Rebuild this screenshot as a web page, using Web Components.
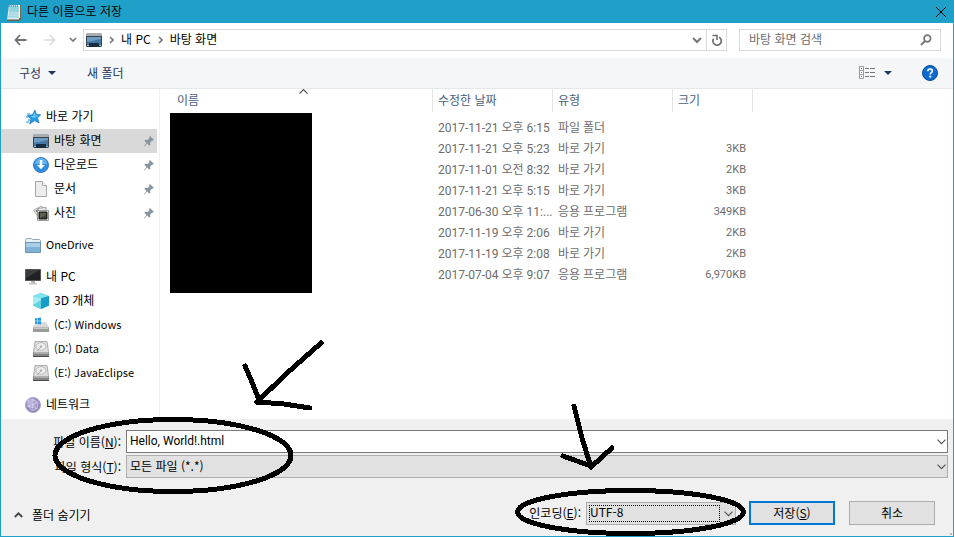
<!DOCTYPE html>
<html lang="ko">
<head>
<meta charset="utf-8">
<title>다른 이름으로 저장</title>
<style>
body { margin: 0; font: 12px/16px "Noto Sans CJK KR", "Noto Sans", sans-serif; color: #000; }
</style>
</head>
<body>
<save-dialog></save-dialog>
<script>
const ICONS = {
  notepad: [16, 18, `<path d="M3 2h12v14l-2 2H1l2-3z" fill="#6c5b42"/><path d="M3 2h10.500L13 16.500H1z" fill="#d6eef3"/><path d="M4 3h9v6H3z" fill="#8fd0dd"/><path d="M3 9h10v6H2z" fill="#b5e2ea"/><path d="M3.500 6h9M3 8.500h9M3 11h9M2.500 13.500h10" stroke="#9fd0db" stroke-width=".7"/><path d="M13.500 2v13" stroke="#fff8df" stroke-width="1.200"/><path d="M3.500 1v3M5.500 1v3M7.500 1v3M9.500 1v3M11.500 1v3" stroke="#78898c" stroke-width=".8"/>`],
  close: [12, 12, `<path d="M1 1l10 10M11 1L1 11" stroke="#000" fill="none"/>`],
  back: [13, 12, `<path d="M6 1L1.500 6 6 11M1.500 6H12.500" stroke="#707070" stroke-width="1.800" fill="none"/>`],
  forward: [13, 12, `<path d="M7 1l4.500 5L7 11M11.500 6H.5" stroke="#dcdcdc" stroke-width="1.600" fill="none"/>`],
  down: [8, 6, `<path d="M1 1l3 3 3-3" stroke="#777" stroke-width="1.600" fill="none"/>`],
  downBig: [10, 7, `<path d="M1 1l4 4 4-4" stroke="#777" stroke-width="2" fill="none"/>`],
  combo: [9, 6, `<path d="M.5.7l4 4 4-4" stroke="#505050" stroke-width="1.100" fill="none"/>`],
  up: [9, 6, `<path d="M.8 5l3.700-3.700L8.200 5" stroke="#444" stroke-width="1.800" fill="none"/>`],
  sort: [9, 5, `<path d="M.5 4.500l4-4 4 4" stroke="#555" stroke-width="1.100" fill="none"/>`],
  right: [5, 8, `<path d="M1 1l3 3-3 3" stroke="#777" stroke-width="1.600" fill="none"/>`],
  tri: [8, 4, `<path d="M0 0h8L4 4z" fill="#1e395b"/>`],
  refresh: [12, 13, `<path d="M8 3.200A4.200 4.200 0 1 1 2.600 4.600" stroke="#6f6f6f" stroke-width="1.700" fill="none"/><path d="M1.500 1.500h4.500v4.500" stroke="#6f6f6f" stroke-width="1.600" fill="none"/>`],
  search: [12, 12, `<circle cx="7.300" cy="4.500" r="3.300" stroke="#777" stroke-width="1.700" fill="none"/><path d="M5 7L1 11" stroke="#777" stroke-width="2"/>`],
  view: [17, 13, `<path d="M.5.5h4v12h-4zM.5 4.500h4M.5 8.500h4" fill="#fff" stroke="#9a9a9a"/><path d="M2 2h1v1H2z" fill="#555"/><path d="M2 6h1v1H2z" fill="#2674d8"/><path d="M2 10h1v1H2z" fill="#d33"/><path d="M6 2.500h4m1 0h5M6 6.500h4m1 0h5M6 10.500h4m1 0h5" stroke="#777"/>`],
  help: [16, 16, `<circle cx="8" cy="8" r="7.500" fill="#0c6bd0" stroke="#0a4a9c"/><path d="M5.800 6.200C5.800 3.300 10.400 3.300 10.300 6c0 1.600-2.100 1.600-2.100 3.500" stroke="#fff" stroke-width="1.700" fill="none"/><path d="M7.200 10.700h2v1.800h-2z" fill="#fff"/>`],
  desktop: [16, 14, `<path d="M1 0h14l1 3v10l-1 1H1l-1-1V3z" fill="#3d4248"/><path d="M1 0h14l1 3H0z" fill="#a9adaf"/><path d="M1 4h14v8H1z" fill="#4678a6"/><path d="M1 4h14v2L1 9z" fill="#6a9cc4"/><path d="M3 10h10v4H3z" fill="#172b3f"/><path d="M1 12h2v1H1zM13 12h2v1h-2z" fill="#84b8da"/>`],
  star: [16, 16, `<path d="M10 1l1.400 4.500 4.300.2-3.200 3.200 1.600 5L9.500 11.600 4.700 15l1.200-5L2.500 6.500l5-.8z" fill="#229ae8" stroke="#1474bd" stroke-width=".7"/><path d="M9.500 3l1 3.500 3 .3-3 1.700-3 .3-2-1.600 3-.5z" fill="#67c9fa"/><path d="M2 5h3M1 8h4M3 11h2M1 13h3" stroke="#1b94df"/>`],
  download: [16, 16, `<circle cx="8" cy="8" r="7.500" fill="#2e8ee0" stroke="#347bbd"/><path d="M2 7a6 6 0 0 1 12 0z" fill="#62b2f0"/><path d="M6.700 3h2.600v5H12l-4 4.200L4 8h2.700z" fill="#fff"/>`],
  doc: [16, 16, `<path d="M2.500.5h7l4 4v11h-11z" fill="#ededed" stroke="#a7a7a7"/><path d="M9.500.5v4h4" fill="#fff" stroke="#a7a7a7"/>`],
  photo: [16, 16, `<path d="M.7 5l8-4 2.600 5-7 5z" fill="#fafafa" stroke="#aaa"/><path d="M2.500 5.500l3-1.500v6" fill="#555"/><path d="M4 3.500l9-1v3" fill="#eee" stroke="#999"/><path d="M4.500 5.500h11v10h-11z" fill="#f6f6f6" stroke="#999"/><path d="M6 7h8v7H6z" fill="#3d3d32" stroke="#171717"/><path d="M7 8h6v2L7 13z" fill="#61614f"/>`],
  pin: [10, 11, `<path d="M6 0l4 4-1 .8-.8-.2-2 2 .1 2.200-1 1L3.200 7.600.2 10.800l-.2-.5L2.500 7 .3 4.800l1-1 2.200.2 2-2L5 1z" fill="#8996a0"/>`],
  folder: [16, 15, `<path d="M.5 2.500l1-2h5l1 1h7l1 1v4H.5z" fill="#e7f0f3" stroke="#8fa9b5"/><path d="M.5 4.500h15v10H.5z" fill="#7fb2d6" stroke="#6b95b2"/><path d="M1 5h14v4H1z" fill="#a7cee5"/>`],
  pc: [16, 16, `<path d="M.5.500h15v11H.5z" fill="#202223" stroke="#555"/><path d="M1 1h14L1 9z" fill="#3a3d3f"/><path d="M6 12h4v2H6z" fill="#aeb4b7"/><path d="M4 14h8v1.500H4z" fill="#c0c4c5"/>`],
  cube: [16, 16, `<path d="M8 0l8 3v9.500L8 16l-8-3.500V3z" fill="#34bfd3"/><path d="M8 0l8 3-8 2.500L0 3z" fill="#7fe3ec"/><path d="M0 3l8 2.500V16l-8-3.500z" fill="#62d3df"/><path d="M8 5.500L16 3v9.500L8 16z" fill="#159cc8"/><path d="M0 3l8 2.500V7L0 12z" fill="#a5edf1"/>`],
  windrive: [16, 16, `<path d="M3 5h10l3 5v4.500H0V10z" fill="#d9d9d9"/><path d="M0 10.500h16V15H0z" fill="#9a9a9a"/><path d="M1 11h14v1H1z" fill="#c9c9c9"/><path d="M12 13h2v1h-2z" fill="#69cb54"/><path d="M2 1.300L4.500 1v2.700H2zM5 .9L8 .5v3.200H5zM2 4.300h2.500V7L2 6.700zM5 4.300h3v3.200L5 7.100z" fill="#2494e2"/>`],
  drive: [16, 16, `<path d="M2 .5h12l1.500 10v5H.5v-5z" fill="#ddd" stroke="#a0a0a0" stroke-width=".8"/><ellipse cx="8" cy="5.500" rx="5" ry="3.900" fill="#eee" stroke="#bbb"/><circle cx="8" cy="5.500" r="1.300" fill="#bbb"/><path d="M8 6l-4 4" stroke="#aaa"/><path d="M0 11.500h16v4H0z" fill="#858585"/><path d="M1 12h14v1H1z" fill="#aaa"/><path d="M0 15h16v1H0z" fill="#4c4c4c"/>`],
  network: [16, 16, `<circle cx="8" cy="8" r="7.500" fill="#9487bd" stroke="#aaa4c4"/><circle cx="7" cy="6" r="5" fill="#aaa0d0"/><path d="M3 3.500l5-1 5 3-1 6-5 2-4-4zM3 3.500l9 8M8 2.500l-5 7 10-4M3 9.500l9 2M8 2.500l-1 11" stroke="#d8d2ed" stroke-width=".7" fill="none"/>`]
};

function define(name, css, html) {
  customElements.define(name, class extends HTMLElement {
    constructor() {
      super();
      const t = document.createElement('template');
      t.innerHTML = `<style>*{box-sizing:border-box}:host{box-sizing:border-box;display:block}
        button,input,select{font:inherit;color:inherit;margin:0;padding:0;border:0;background:none;border-radius:0;outline:0}
        button{display:flex;align-items:center;justify-content:center}${css}</style>` +
        (typeof html === 'function' ? html(this) : html);
      this.attachShadow({ mode: 'open' }).append(t.content.cloneNode(true));
    }
  });
}

define('ui-icon', `:host{display:inline-block;flex:none;line-height:0}svg{display:block}`, el => {
  const [w, h, body] = ICONS[el.getAttribute('name')];
  return `<svg width="${w}" height="${h}" viewBox="0 0 ${w} ${h}" aria-hidden="true">${body}</svg>`;
});

define('title-bar', `:host{display:flex;align-items:center;gap:5px;height:23px;padding:0 6px 0 5px;background:#1fa0c8}
  span{flex:1;padding-bottom:2px}`,
  `<ui-icon name="notepad"></ui-icon><span><slot></slot></span><button aria-label="닫기"><ui-icon name="close"></ui-icon></button>`);

define('nav-bar', `:host{display:flex;align-items:center;padding:6px 12px 7px 13px;background:#fff}
  .hist{display:flex;gap:16px;width:69px}.hist button:last-child{margin-left:-3px}
  .addr{flex:1;display:flex;align-items:center;height:22px;border:1px solid #d9d9d9;padding-left:2px}
  .addr a{color:inherit;text-decoration:none;display:flex;padding-bottom:2px}
  nav{display:flex;align-items:center;gap:7px;flex:1}
  .drop{width:18px;height:20px}.re{width:20px;height:20px;border-left:1px solid #d9d9d9}
  .find{width:202px;margin-left:12px;height:22px;border:1px solid #d9d9d9;display:flex;align-items:center;padding:0 8px 0 9px}
  input{flex:1;min-width:0;height:20px;padding-bottom:3px}input::placeholder{color:#6d6d6d;opacity:1}`,
  `<div class="hist"><button aria-label="뒤로"><ui-icon name="back"></ui-icon></button><button aria-label="앞으로"><ui-icon name="forward"></ui-icon></button><button aria-label="최근 위치"><ui-icon name="down"></ui-icon></button></div>
  <div class="addr"><nav><ui-icon name="desktop"></ui-icon><ui-icon name="right"></ui-icon><a href="#pc">내 PC</a><ui-icon name="right"></ui-icon><a href="#desktop">바탕 화면</a></nav>
  <button class="drop" aria-label="이전 위치"><ui-icon name="downBig"></ui-icon></button><button class="re" aria-label="새로 고침"><ui-icon name="refresh"></ui-icon></button></div>
  <div class="find"><input type="search" aria-label="바탕 화면 검색" placeholder="바탕 화면 검색"><ui-icon name="search"></ui-icon></div>`);

define('tool-bar', `:host{display:flex;align-items:center;height:31px;padding:0 15px 1px 18px;background:#f5f6f7;border-bottom:1px solid #e5e7ea;color:#1e395b}
  button{gap:7px}.new{margin-left:31px}.view{margin-left:auto;gap:8px}.help{margin-left:30px}`,
  `<button>구성<ui-icon name="tri"></ui-icon></button><button class="new">새 폴더</button>
  <button class="view" aria-label="보기 변경"><ui-icon name="view"></ui-icon><ui-icon name="tri"></ui-icon></button><button class="help" aria-label="도움말"><ui-icon name="help"></ui-icon></button>`);

define('tree-item', `:host{padding-right:2px}a{display:flex;align-items:center;gap:5px;height:24px;padding:0 3px 0 24px;color:inherit;text-decoration:none}
  :host([sub]) a{padding-left:32px}:host([selected]) a{background:#d9d9d9}span{flex:1;white-space:nowrap;padding-bottom:2px}
  :host([latin]) span{font-size:11px}`,
  el => `<a href="#item"><ui-icon name="${el.getAttribute('icon')}"></ui-icon><span><slot></slot></span>${el.hasAttribute('pinned') ? '<ui-icon name="pin"></ui-icon>' : ''}</a>`);

define('folder-tree', `:host{width:159px;flex:none;padding:16px 0 2px;border-right:1px solid #f0f0f0}
  nav{display:flex;flex-direction:column;gap:8px}`,
  `<nav aria-label="폴더"><div><tree-item icon="star">바로 가기</tree-item><tree-item sub selected pinned icon="desktop">바탕 화면</tree-item><tree-item sub pinned icon="download">다운로드</tree-item><tree-item sub pinned icon="doc">문서</tree-item><tree-item sub pinned icon="photo">사진</tree-item></div>
  <div><tree-item latin icon="folder">OneDrive</tree-item></div>
  <div><tree-item icon="pc">내 PC</tree-item><tree-item sub icon="cube">3D 개체</tree-item><tree-item sub latin icon="windrive">(C:) Windows</tree-item><tree-item sub latin icon="drive">(D:) Data</tree-item><tree-item sub latin icon="drive">(E:) JavaEclipse</tree-item></div>
  <div><tree-item icon="network">네트워크</tree-item></div></nav>`);

const FILES = [
  ['2017-11-21 오후 6:15', '파일 폴더', ''], ['2017-11-21 오후 5:23', '바로 가기', '3KB'],
  ['2017-11-01 오전 8:32', '바로 가기', '2KB'], ['2017-11-21 오후 5:15', '바로 가기', '3KB'],
  ['2017-06-30 오후 11:...', '응용 프로그램', '349KB'], ['2017-11-19 오후 2:06', '바로 가기', '2KB'],
  ['2017-11-19 오후 2:08', '바로 가기', '2KB'], ['2017-07-04 오후 9:07', '응용 프로그램', '6,970KB']
];
define('file-list', `:host{flex:1;min-width:0;position:relative;padding-left:13px}
  table{border-collapse:separate;border-spacing:0;table-layout:fixed;width:580px}
  th{height:23px;padding:0 0 2px 5px;text-align:left;font-weight:400;color:#4c607a;border-right:1px solid #e5e5e5}
  th:first-child{padding-left:4px;position:relative}th ui-icon{position:absolute;left:50%;top:0;margin-left:-4px}
  td{height:21px;padding:0 0 0 5px;color:#6d6d6d;white-space:nowrap;font-family:Roboto,"Noto Sans CJK KR",sans-serif}
  td:last-child{text-align:right;padding-right:7px;font-size:11px}
  tbody::before{content:"";display:block;height:5px}
  .cover{position:absolute;left:10px;top:24px;width:142px;height:180px;background:#000}`,
  `<table><colgroup><col style="width:260px"><col style="width:120px"><col style="width:120px"><col style="width:80px"></colgroup>
  <thead><tr><th>이름<ui-icon name="sort"></ui-icon></th><th>수정한 날짜</th><th>유형</th><th>크기</th></tr></thead>
  <tbody>${FILES.map(r => `<tr><td></td>${r.map(c => `<td>${c}</td>`).join('')}</tr>`).join('')}</tbody></table><div class="cover"></div>`);

define('save-form', `:host{position:relative;background:#f0f0f0;padding:11px 5px 11px 12px}
  .fields{display:grid;grid-template-columns:108px 1fr;column-gap:5px;row-gap:2px;align-items:center}
  label{text-align:right;white-space:nowrap}
  .box{position:relative;height:23px;border:1px solid #adadad;background:#e1e1e1;display:flex}
  .box.edit{background:#fff;border-color:#7a7a7a}
  input,select{appearance:none;flex:1;min-width:0;width:100%;padding:0 20px 2px 3px}
  input{font-family:Roboto,"Noto Sans CJK KR",sans-serif}
  .box ui-icon{position:absolute;right:1px;top:8px;pointer-events:none}
  .box.edit button{position:absolute;right:0;top:0;width:16px;height:21px}
  .row{display:flex;align-items:center;margin-top:23px;padding-right:13px}
  .hide{gap:9px;margin-right:auto;padding:4px 0 0 1px}
  .enc{width:150px;margin:0 13px 0 5px}.enc ui-icon{right:2px}.enc::after{content:"";position:absolute;inset:2px 15px 2px 2px;border:1px dotted #000;pointer-events:none}
  .act{width:86px;height:24px;background:#e1e1e1;border:1px solid #adadad}.act.main{border:2px solid #0078d7;margin-right:14px}
  .grip{position:absolute;right:1px;bottom:1px;width:2px;height:2px;background:#b8b8b8}`,
  `<div class="fields"><label for="name">파일 이름(<u>N</u>):</label><div class="box edit"><input id="name" type="text" value="Hello, World!.html"><button aria-label="목록 열기"></button><ui-icon name="combo"></ui-icon></div>
  <label for="type">파일 형식(<u>T</u>):</label><div class="box"><select id="type"><option>모든 파일 (*.*)</option></select><ui-icon name="combo"></ui-icon></div></div>
  <div class="row"><button class="hide"><ui-icon name="up"></ui-icon>폴더 숨기기</button>
  <label for="enc">인코딩(<u>E</u>):</label><div class="box enc"><select id="enc"><option>UTF-8</option></select><ui-icon name="combo"></ui-icon></div>
  <button class="act main"><span>저장(<u>S</u>)</span></button><button class="act">취소</button></div><div class="grip"></div>`);

define('pen-marks', `:host{position:absolute;inset:0 -1px -1px -1px;pointer-events:none}svg{display:block;width:100%;height:100%}`,
  `<svg viewBox="0 0 954 537" fill="none" stroke="#000" stroke-width="5" stroke-linecap="round" stroke-linejoin="round" shape-rendering="crispEdges" aria-hidden="true">
  <ellipse cx="173" cy="455.500" rx="118" ry="36"/><path d="M321 343l-35 31-29 28M245 366l7 16 7 18M257 402l27 2 26 4"/>
  <ellipse cx="630.500" cy="512" rx="113" ry="21.500"/><path d="M574 406l8 32 9 29M563 456l28 10M591 467l11-10 10-9"/></svg>`);

define('save-dialog', `:host{position:relative;display:flex;flex-direction:column;min-height:100vh;border:1px solid #1fa0c8;border-top:0;background:#fff}
  main{flex:1;display:flex}`,
  `<title-bar>다른 이름으로 저장</title-bar><nav-bar></nav-bar><tool-bar></tool-bar><main><folder-tree></folder-tree><file-list></file-list></main><save-form></save-form><pen-marks></pen-marks>`);
</script>
</body>
</html>
